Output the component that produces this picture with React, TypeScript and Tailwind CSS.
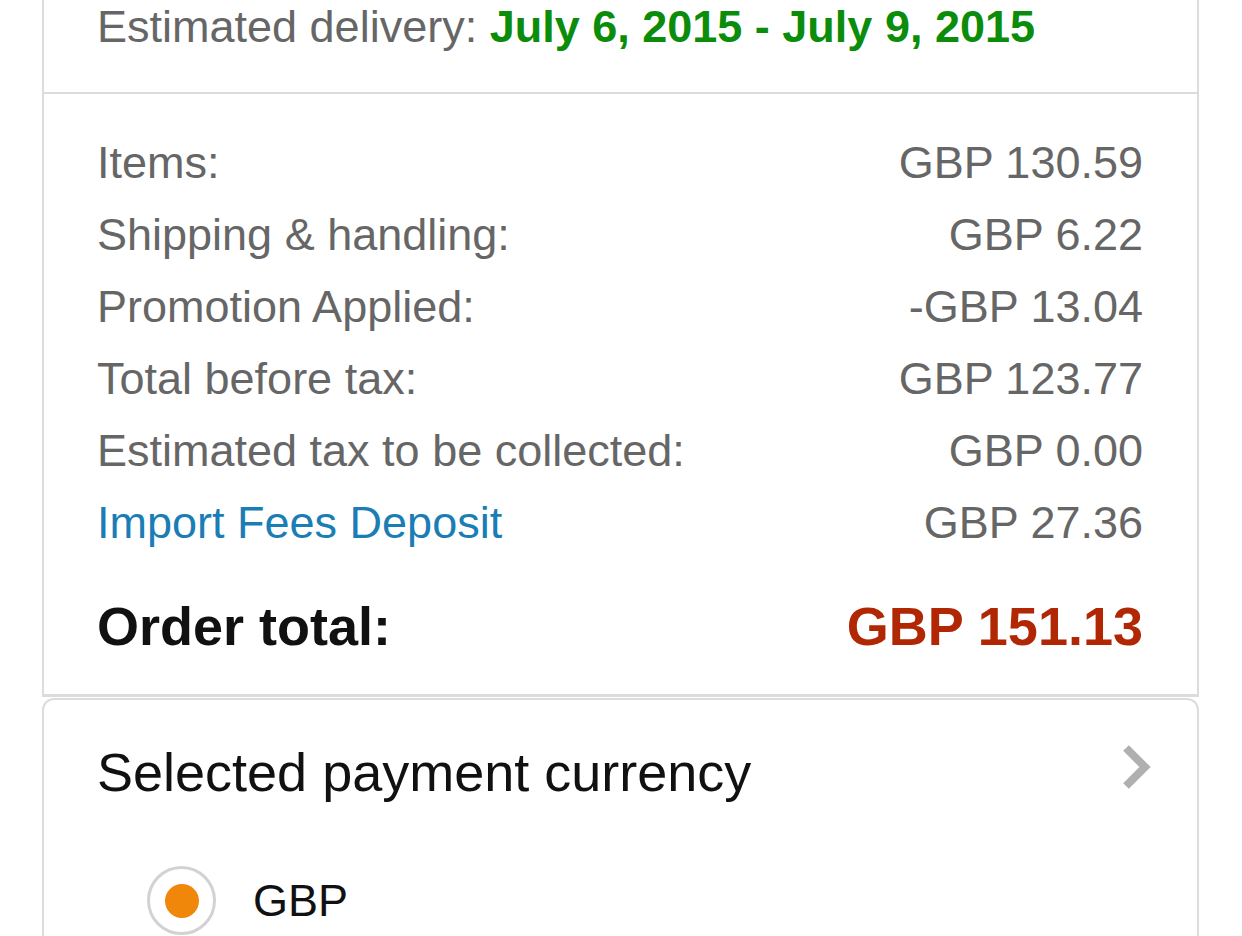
import React from "react";

const rows: { label: string; value: string; link?: boolean }[] = [
  { label: "Items:", value: "GBP 130.59" },
  { label: "Shipping & handling:", value: "GBP 6.22" },
  { label: "Promotion Applied:", value: "-GBP 13.04" },
  { label: "Total before tax:", value: "GBP 123.77" },
  { label: "Estimated tax to be collected:", value: "GBP 0.00" },
  { label: "Import Fees Deposit", value: "GBP 27.36", link: true },
];

export default function App() {
  return (
    <div
      className="w-[1242px] h-[936px] overflow-hidden bg-white"
      style={{ fontFamily: '"Liberation Sans", Arial, Helvetica, sans-serif' }}
    >
      <div className="ml-[42px] w-[1157px]">
        {/* Box 1 */}
        <div className="h-[94px] border-x-2 border-b-2 border-[#dcdcdc] pl-[53px]">
          <div className="text-[45px] leading-[54px] text-[#666666] whitespace-nowrap">
            Estimated delivery:{" "}
            <span className="font-bold text-[#0b8c0b]">July 6, 2015 - July 9, 2015</span>
          </div>
        </div>

        {/* Box 2 */}
        <div className="border-x-2 border-b-[3px] border-[#dcdcdc] pl-[53px] pr-[54px] pt-[33px] pb-[32px]">
          <div className="flex flex-col">
            {rows.map((r) => (
              <div key={r.label} className="flex h-[72px] items-center justify-between">
                <span
                  className={
                    "text-[45px] leading-[72px] whitespace-nowrap " +
                    (r.link ? "text-[#1a7db6]" : "text-[#666666]")
                  }
                >
                  {r.label}
                </span>
                <span className="text-[45px] leading-[72px] text-[#666666] whitespace-nowrap">
                  {r.value}
                </span>
              </div>
            ))}
          </div>
          <div className="mt-[31px] flex h-[72px] items-center justify-between">
            <span className="text-[54px] font-bold text-[#111111] leading-[72px] whitespace-nowrap">
              Order total:
            </span>
            <span className="text-[54px] font-bold text-[#b12704] leading-[72px] whitespace-nowrap">
              GBP 151.13
            </span>
          </div>
        </div>

        {/* Box 3 */}
        <div className="mt-[1px] h-[400px] rounded-t-[12px] border-x-2 border-t-2 border-[#dcdcdc] pl-[53px] pr-[46px]">
          <div className="mt-[40px] flex h-[64px] items-center justify-between">
            <span className="text-[54px] leading-[64px] text-[#111111] whitespace-nowrap">
              Selected payment currency
            </span>
            <svg width="30" height="48" viewBox="0 0 30 48" className="-mt-[10px]">
              <polyline
                points="5,5 24,24 5,43"
                fill="none"
                stroke="#b0b0b0"
                strokeWidth="8"
                strokeLinecap="butt"
                strokeLinejoin="miter"
              />
            </svg>
          </div>
          <div className="mt-[62px] flex items-center pl-[50px]">
            <div className="flex h-[69px] w-[69px] items-center justify-center rounded-full border-[3px] border-[#d2d2d2]">
              <div className="h-[34px] w-[34px] rounded-full bg-[#f0860a]" />
            </div>
            <span className="ml-[37px] text-[45px] leading-[54px] text-[#111111]">GBP</span>
          </div>
        </div>
      </div>
    </div>
  );
}
